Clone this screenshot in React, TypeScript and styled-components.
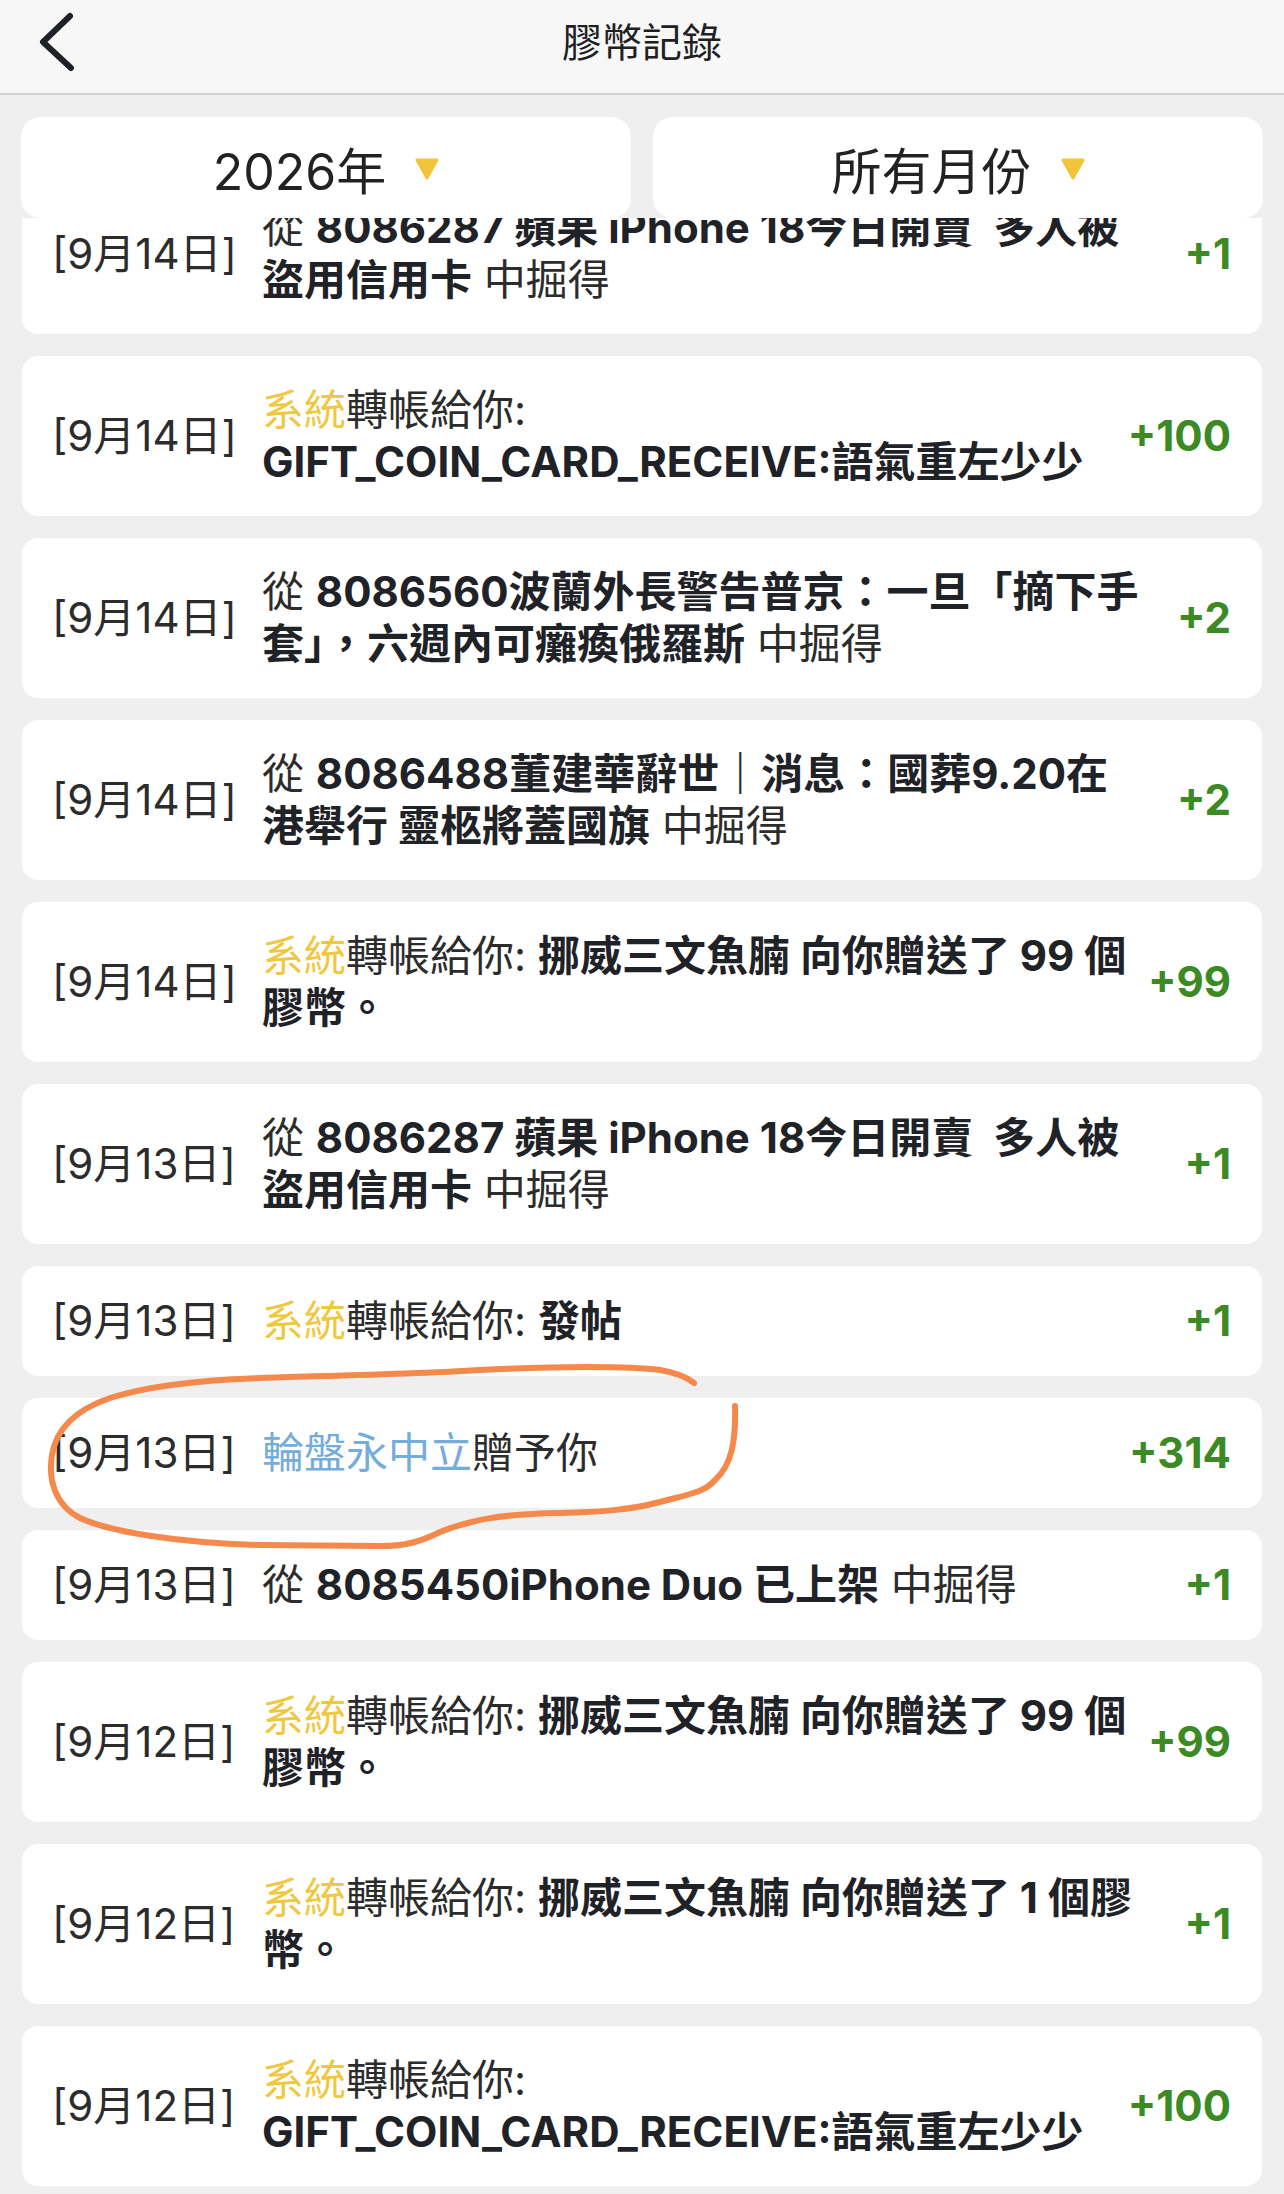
import React from 'react';
import styled, { createGlobalStyle } from 'styled-components';

const Colors = {
  pageBg: '#efefef',
  headerBg: '#f7f7f7',
  headerLine: '#d2d2d2',
  card: '#ffffff',
  text: '#1f2328',
  textSoft: '#2c2c2c',
  system: '#f0c83f',
  user: '#74acdb',
  amount: '#3b8a24',
  caret: '#f2c43a',
  marker: '#f5884b',
};

const FONT = `Inter, "Noto Sans CJK TC", "Noto Sans", sans-serif`;

const GlobalStyle = createGlobalStyle`
  * { margin: 0; padding: 0; box-sizing: border-box; }
  body {
    background: ${Colors.pageBg};
    font-family: ${FONT};
    color: ${Colors.text};
    -webkit-font-smoothing: antialiased;
  }
`;

const Page = styled.div`
  position: relative;
  width: 1284px;
  height: 2194px;
  overflow: hidden;
  background: ${Colors.pageBg};
  display: flex;
  flex-direction: column;
`;

const Header = styled.header`
  height: 95px;
  flex-shrink: 0;
  display: grid;
  grid-template-columns: 160px 1fr 160px;
  align-items: center;
  background: ${Colors.headerBg};
  border-bottom: 2px solid ${Colors.headerLine};
`;

const BackButton = styled.button`
  align-self: start;
  width: 40px;
  height: 64px;
  margin: 10px 0 0 38px;
  border: none;
  background: none;
  cursor: pointer;
  svg { display: block; }
`;

const Title = styled.h1`
  text-align: center;
  font-size: 40px;
  font-weight: 400;
  color: #202020;
  line-height: 1;
  margin-top: -8px;
`;

const FilterBar = styled.div`
  flex-shrink: 0;
  display: grid;
  grid-template-columns: 1fr 1fr;
  gap: 22px;
  padding: 22px 21px 0;
`;

const Dropdown = styled.button`
  height: 101px;
  border: none;
  border-radius: 20px;
  background: ${Colors.card};
  display: flex;
  align-items: center;
  justify-content: center;
  gap: 29px;
  font-family: ${FONT};
  font-size: 50px;
  font-weight: 400;
  color: #222;
  cursor: pointer;
`;

const Caret = styled.svg`
  width: 24px;
  height: 22px;
  margin-top: 2px;
`;

const ListViewport = styled.div`
  flex: 1;
  overflow: hidden;
`;

const List = styled.div`
  display: flex;
  flex-direction: column;
  gap: 22px;
  padding: 0 22px;
  margin-top: -44px;
`;

const Card = styled.div`
  min-height: 110px;
  display: flex;
  align-items: center;
  padding: 28px 31px 28px 30px;
  border-radius: 16px;
  background: ${Colors.card};
  font-size: 42px;
  line-height: 52px;
`;

const DateCol = styled.div`
  width: 210px;
  flex-shrink: 0;
  color: ${Colors.textSoft};
  white-space: nowrap;
`;

const Body = styled.div`
  flex: 1;
  min-width: 0;
`;

const Line = styled.div`
  white-space: pre;
`;

const Seg = styled.span<{ $kind: SegKind }>`
  font-weight: ${p => (p.$kind === 'bold' ? 700 : 400)};
  color: ${p =>
    p.$kind === 'sys' ? Colors.system : p.$kind === 'user' ? Colors.user : p.$kind === 'bold' ? Colors.text : Colors.textSoft};
`;

const Amount = styled.div`
  flex-shrink: 0;
  margin-left: 20px;
  font-size: 42px;
  font-weight: 700;
  color: ${Colors.amount};
`;

const Marker = styled.svg`
  position: absolute;
  left: 0;
  top: 0;
  pointer-events: none;
`;

type SegKind = 'plain' | 'bold' | 'sys' | 'user';
type Piece = [SegKind, string];
type Record = { date: string; lines: Piece[][]; amount: string };

const sys: Piece = ['sys', '系統'];

const records: Record[] = [
  { date: '9月14日', amount: '+1', lines: [[['plain', '從 '], ['bold', '8086287 蘋果 iPhone 18今日開賣  多人被']], [['bold', '盜用信用卡'], ['plain', ' 中掘得']]] },
  { date: '9月14日', amount: '+100', lines: [[sys, ['plain', '轉帳給你:']], [['bold', 'GIFT_COIN_CARD_RECEIVE:語氣重左少少']]] },
  { date: '9月14日', amount: '+2', lines: [[['plain', '從 '], ['bold', '8086560波蘭外長警告普京：一旦「摘下手']], [['bold', '套」，六週內可癱瘓俄羅斯'], ['plain', ' 中掘得']]] },
  { date: '9月14日', amount: '+2', lines: [[['plain', '從 '], ['bold', '8086488董建華辭世｜消息：國葬9.20在']], [['bold', '港舉行 靈柩將蓋國旗'], ['plain', ' 中掘得']]] },
  { date: '9月14日', amount: '+99', lines: [[sys, ['plain', '轉帳給你: '], ['bold', '挪威三文魚腩 向你贈送了 99 個']], [['bold', '膠幣。']]] },
  { date: '9月13日', amount: '+1', lines: [[['plain', '從 '], ['bold', '8086287 蘋果 iPhone 18今日開賣  多人被']], [['bold', '盜用信用卡'], ['plain', ' 中掘得']]] },
  { date: '9月13日', amount: '+1', lines: [[sys, ['plain', '轉帳給你: '], ['bold', '發帖']]] },
  { date: '9月13日', amount: '+314', lines: [[['user', '輪盤永中立'], ['plain', '贈予你']]] },
  { date: '9月13日', amount: '+1', lines: [[['plain', '從 '], ['bold', '8085450iPhone Duo 已上架'], ['plain', ' 中掘得']]] },
  { date: '9月12日', amount: '+99', lines: [[sys, ['plain', '轉帳給你: '], ['bold', '挪威三文魚腩 向你贈送了 99 個']], [['bold', '膠幣。']]] },
  { date: '9月12日', amount: '+1', lines: [[sys, ['plain', '轉帳給你: '], ['bold', '挪威三文魚腩 向你贈送了 1 個膠']], [['bold', '幣。']]] },
  { date: '9月12日', amount: '+100', lines: [[sys, ['plain', '轉帳給你:']], [['bold', 'GIFT_COIN_CARD_RECEIVE:語氣重左少少']]] },
];

const CaretIcon = () => (
  <Caret viewBox="0 0 24 22">
    <polygon points="2,2 22,2 12,20" fill={Colors.caret} stroke={Colors.caret} strokeWidth="3" strokeLinejoin="round" />
  </Caret>
);

// hand-drawn circle someone scribbled over the screenshot
const markerPath =
  'M 735 1406 C 736 1440, 732 1465, 715 1480 C 705 1492, 690 1494, 660 1502 C 630 1510, 600 1512, 560 1513 ' +
  'C 500 1514, 470 1520, 440 1532 C 420 1542, 405 1546, 380 1546 L 260 1545 C 180 1543, 110 1532, 80 1518 ' +
  'C 55 1505, 48 1480, 52 1455 C 56 1430, 75 1410, 110 1398 C 150 1385, 200 1380, 260 1378 ' +
  'C 320 1376, 420 1374, 480 1370 C 560 1366, 630 1366, 660 1370 C 678 1373, 688 1378, 694 1383';

const App: React.FC = () => {
  return (
    <Page>
      <GlobalStyle />
      <Header>
        <BackButton aria-label="返回">
          <svg width="40" height="64" viewBox="0 0 40 64">
            <polyline points="32,6 5,32 33,58" fill="none" stroke="#1e2228" strokeWidth="6" strokeLinecap="round" strokeLinejoin="round" />
          </svg>
        </BackButton>
        <Title>膠幣記錄</Title>
        <div />
      </Header>

      <FilterBar>
        <Dropdown>
          2026年
          <CaretIcon />
        </Dropdown>
        <Dropdown>
          所有月份
          <CaretIcon />
        </Dropdown>
      </FilterBar>

      <ListViewport>
        <List>
          {records.map((r, i) => (
            <Card key={i}>
              <DateCol>[{r.date}]</DateCol>
              <Body>
                {r.lines.map((line, j) => (
                  <Line key={j}>
                    {line.map(([kind, text], k) => (
                      <Seg key={k} $kind={kind}>{text}</Seg>
                    ))}
                  </Line>
                ))}
              </Body>
              <Amount>{r.amount}</Amount>
            </Card>
          ))}
        </List>
      </ListViewport>

      <Marker width="1284" height="2194" viewBox="0 0 1284 2194">
        <path d={markerPath} fill="none" stroke={Colors.marker} strokeWidth="6" strokeLinecap="round" strokeLinejoin="round" />
      </Marker>
    </Page>
  );
};

export default App;
